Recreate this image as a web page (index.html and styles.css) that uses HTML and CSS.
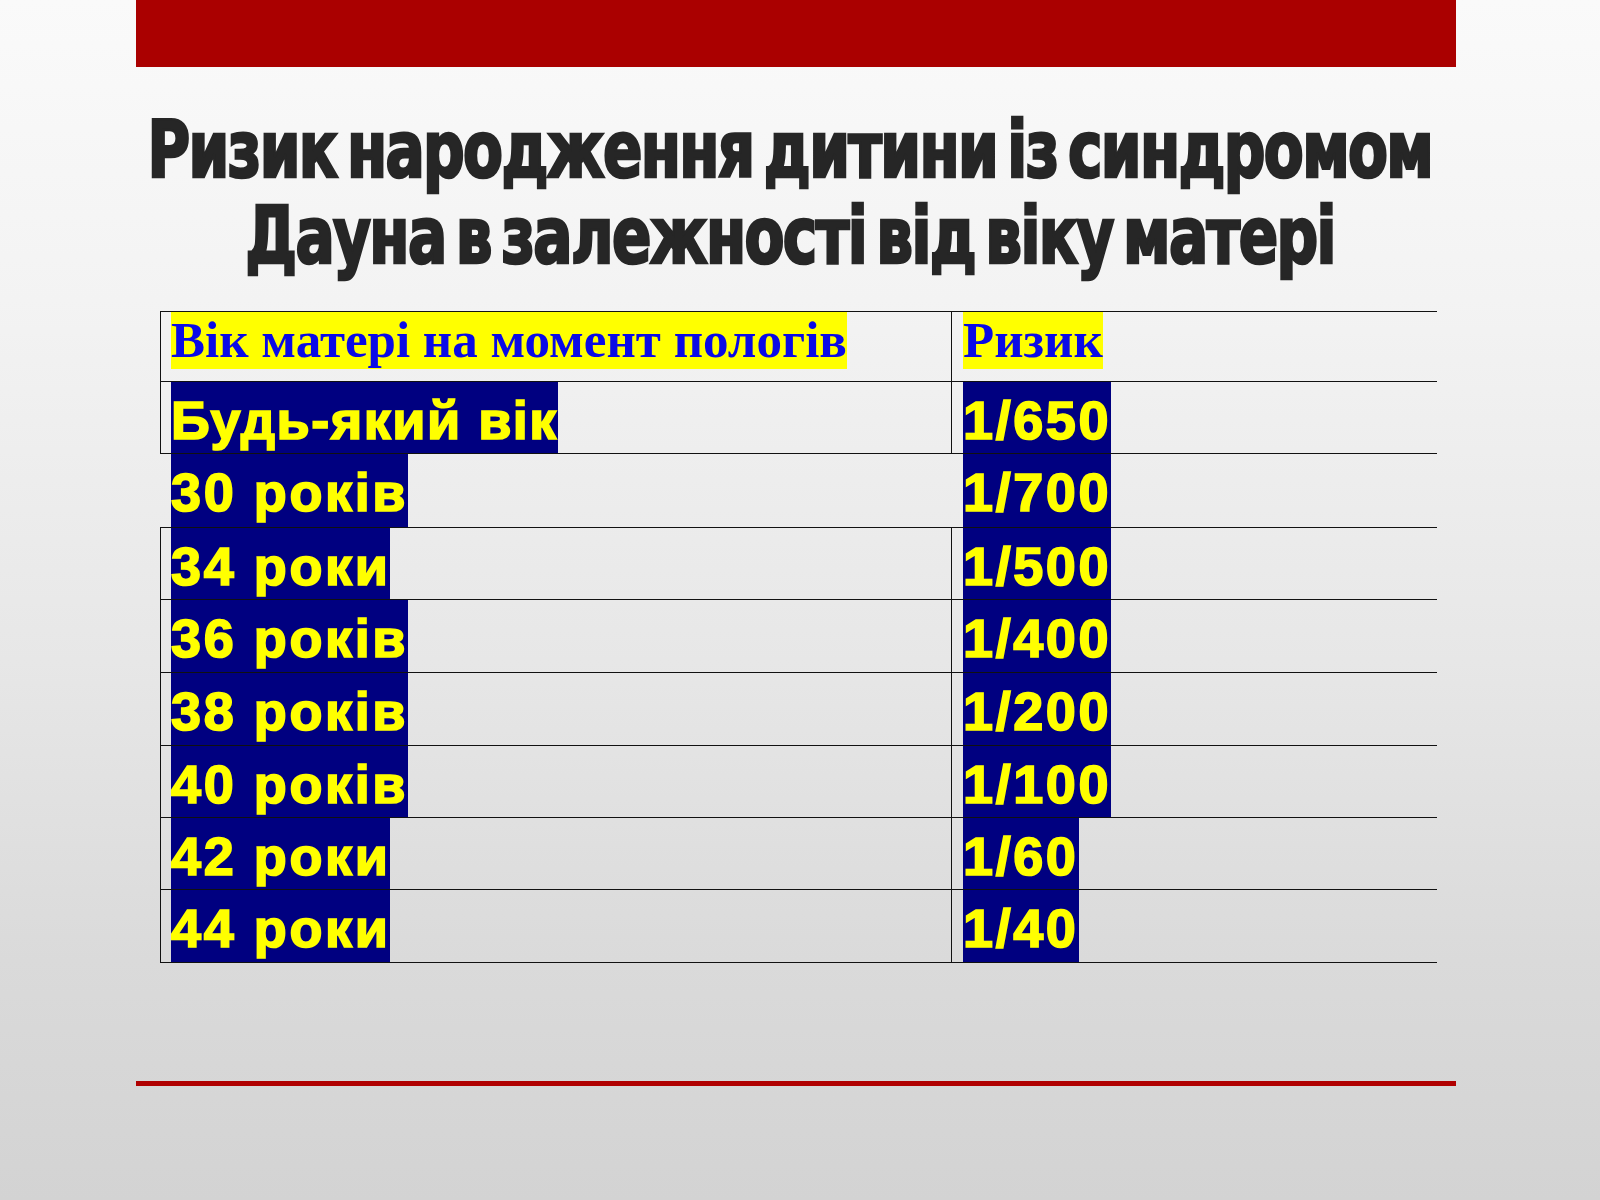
FILE: index.html
```html
<!DOCTYPE html>
<html lang="uk">
<head>
<meta charset="utf-8">
<title>Ризик народження дитини із синдромом Дауна</title>
<link rel="stylesheet" href="styles.css">
</head>
<body>
<div class="slide">
  <div class="topbar"></div>
  <h1 class="title">
    <span class="line">Ризик народження дитини із синдромом</span>
    <span class="line">Дауна в залежності від віку матері</span>
  </h1>
  <div class="risk">
    <div class="cell c1 head vl"><span class="hv">Вік матері на момент пологів</span></div>
    <div class="cell c2 head vl"><span class="hv">Ризик</span></div>

    <div class="cell c1 vl"><span class="val tight">Будь-який вік</span></div>
    <div class="cell c2 vl"><span class="val">1/650</span></div>

    <div class="cell c1"><span class="val">30 років</span></div>
    <div class="cell c2"><span class="val">1/700</span></div>

    <div class="cell c1 vl"><span class="val">34 роки</span></div>
    <div class="cell c2 vl"><span class="val">1/500</span></div>

    <div class="cell c1 vl"><span class="val">36 років</span></div>
    <div class="cell c2 vl"><span class="val">1/400</span></div>

    <div class="cell c1 vl"><span class="val">38 років</span></div>
    <div class="cell c2 vl"><span class="val">1/200</span></div>

    <div class="cell c1 vl"><span class="val">40 років</span></div>
    <div class="cell c2 vl"><span class="val">1/100</span></div>

    <div class="cell c1 vl"><span class="val">42 роки</span></div>
    <div class="cell c2 vl"><span class="val">1/60</span></div>

    <div class="cell c1 vl"><span class="val">44 роки</span></div>
    <div class="cell c2 vl"><span class="val">1/40</span></div>
  </div>
  <div class="bottomline"></div>
</div>
</body>
</html>
```

FILE: styles.css
```css
html, body {
  margin: 0;
  padding: 0;
}
body {
  width: 1600px;
  height: 1200px;
  overflow: hidden;
  background: linear-gradient(to bottom, #fafafa 0%, #f3f3f3 25%, #e7e7e7 55%, #dadada 80%, #d3d3d3 100%);
}
.slide {
  width: 1600px;
  height: 1200px;
  display: flex;
  flex-direction: column;
}
.topbar {
  margin-left: 136px;
  width: 1320px;
  height: 67px;
  background: #aa0000;
}
.title {
  margin: 40px 0 0 136px;
  width: 1308px;
  display: flex;
  flex-direction: column;
  align-items: center;
  font-family: "DejaVu Sans Condensed", "DejaVu Sans", sans-serif;
  font-weight: 700;
  font-size: 78px;
  line-height: 86px;
  color: #262626;
  letter-spacing: -2px;
  word-spacing: -10px;
  -webkit-text-stroke: 2.6px #262626;
}
.title .line {
  display: block;
  white-space: nowrap;
  transform: scaleX(0.829);
  transform-origin: center;
}
.risk {
  margin: 32px 0 0 160px;
  display: grid;
  grid-template-columns: 791px 486px;
  grid-template-rows: 71px 72px 74px 72px 73px 73px 72px 72px 73px;
}
.cell {
  box-sizing: border-box;
  border-bottom: 1px solid #111;
  display: flex;
  align-items: stretch;
}
.cell.head {
  border-top: 1px solid #111;
  align-items: flex-start;
}
.c1 {
  padding-left: 11px;
}
.c2 {
  padding-left: 12px;
}
.c1.vl {
  border-left: 1px solid #111;
  padding-left: 10px;
}
.c2.vl {
  border-left: 1px solid #111;
  padding-left: 11px;
}
.hv {
  display: block;
  height: 57px;
  line-height: 57px;
  background: #ffff00;
  color: #0a0ae6;
  font-family: "Liberation Serif", "Times New Roman", serif;
  font-weight: 700;
  font-size: 51px;
  white-space: nowrap;
}
.val {
  display: block;
  box-sizing: border-box;
  padding-top: 5px;
  line-height: 66px;
  background: #000080;
  color: #ffff00;
  font-family: "Liberation Sans", Arial, sans-serif;
  font-weight: 700;
  font-size: 54px;
  letter-spacing: 2.6px;
  -webkit-text-stroke: 1.7px #ffff00;
  white-space: nowrap;
}
.val.tight {
  letter-spacing: 1.5px;
}
.bottomline {
  margin: 118px 0 0 136px;
  width: 1320px;
  height: 5px;
  background: #b00000;
  box-shadow: 0 -7px 0 -6px rgba(255, 255, 255, 0.7);
}
```
